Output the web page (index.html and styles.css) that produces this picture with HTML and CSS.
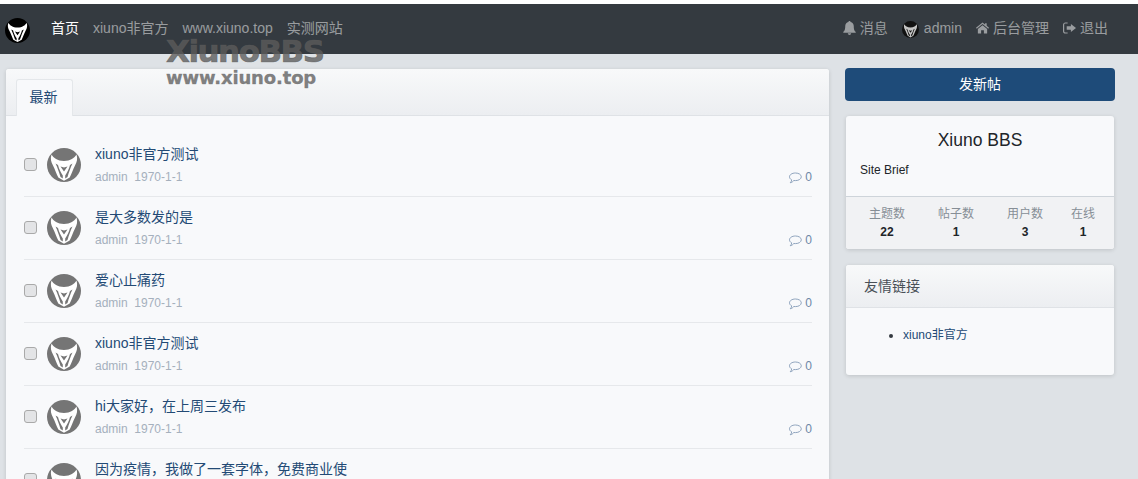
FILE: index.html
```html
<!DOCTYPE html>
<html lang="zh">
<head>
<meta charset="utf-8">
<title>Xiuno BBS</title>
<link rel="stylesheet" href="styles.css">
</head>
<body>
<svg class="defs" width="0" height="0" aria-hidden="true">
  <symbol id="mark" viewBox="0 0 34 34">
    <path class="mark-head" d="M4.500 6.500C6.500 10 10.500 13 17 13S27.500 10 29.500 6.500C30.800 10.500 30 14 28 17.500C26 21.500 24.500 26 22.700 29.500L17 32.800L11.300 29.500C9.500 26 8 21.500 6 17.500C4 14 3.200 10.500 4.500 6.500Z"/>
    <path class="mark-cut" d="M8.500 15.500L11 17C12 21 14 25 15.800 27.500V30.500L13.500 29C12 24 10.500 19.500 8.500 15.500ZM25.500 15.500L23 17C22 21 20 25 18.200 27.500V30.500L20.500 29C22 24 23.500 19.500 25.500 15.500Z"/>
    <path class="mark-cut" d="M13.500 18.500L17 19.500L20.500 18.500L17 23.500Z"/>
  </symbol>
  <symbol id="bubble" viewBox="0 0 14 12">
    <path d="M7.500 1C4 1 1.500 2.700 1.500 4.800C1.500 6.200 2.400 7.200 3.700 7.900C3.600 9 3 10 2.200 10.800C3.800 10.500 5 9.600 5.800 8.500C6.400 8.600 6.900 8.600 7.500 8.600C10.800 8.600 13.300 6.900 13.300 4.800S10.800 1 7.500 1Z"/>
  </symbol>
</svg>

<header class="navbar">
  <svg class="logo" viewBox="0 0 34 34"><circle cx="17" cy="17" r="17" fill="#000"/><use href="#mark"/></svg>
  <nav class="nav-left">
    <a class="nav-link active">首页</a>
    <a class="nav-link">xiuno非官方</a>
    <a class="nav-link">www.xiuno.top</a>
    <a class="nav-link">实测网站</a>
  </nav>
  <nav class="nav-right">
    <a class="nav-link icon-link">
      <svg class="nav-icon" viewBox="0 0 14 15"><path fill="currentColor" d="M7 0C6.300 0 5.800.5 5.800 1.100C3.700 1.600 2.400 3.300 2.400 5.500C2.400 9.500 1.500 10.500 .3 11.700V12.500H13.700V11.700C12.500 10.500 11.600 9.500 11.600 5.500C11.600 3.300 10.300 1.600 8.200 1.100C8.200.5 7.700 0 7 0ZM5.200 13.200C5.300 14.200 6.100 15 7 15S8.700 14.200 8.800 13.200Z"/></svg>
      消息
    </a>
    <a class="nav-link user-link">
      <svg class="nav-avatar" viewBox="0 0 34 34"><circle cx="17" cy="17" r="17" fill="#111"/><use href="#mark" class="mark-dim"/></svg>
      admin
    </a>
    <a class="nav-link icon-link">
      <svg class="nav-icon" viewBox="0 0 14 12"><path fill="currentColor" d="M7 0L0 5.800L.8 6.800L7 1.700L13.200 6.800L14 5.800L11.500 3.700V.8H9.800V2.300ZM2 7.200V12H5.500V8.400H8.500V12H12V7.200L7 3Z"/></svg>
      后台管理
    </a>
    <a class="nav-link icon-link">
      <svg class="nav-icon" viewBox="0 0 14 12"><path fill="currentColor" d="M5 1V0H2.500C1.100 0 0 1.100 0 2.500V9.500C0 10.900 1.100 12 2.500 12H5V10.800H2.600C1.800 10.800 1.300 10.300 1.300 9.500V2.500C1.300 1.700 1.800 1.200 2.600 1.200H5ZM8.500 1.800V4.200H4V7.800H8.500V10.200L14 6Z"/></svg>
      退出
    </a>
  </nav>
</header>

<div class="watermark">
  <div class="wm-big">XiunoBBS</div>
  <div class="wm-small">www.xiuno.top</div>
</div>

<div class="page">
  <main class="main-card">
    <div class="tabs"><a class="tab">最新</a></div>
    <ul class="threads">
      <li class="thread">
        <input class="check" type="checkbox">
        <svg class="avatar" viewBox="0 0 34 34"><circle cx="17" cy="17" r="17" fill="#757575"/><use href="#mark"/></svg>
        <div class="thread-body">
          <a class="thread-title">xiuno非官方测试</a>
          <div class="thread-meta"><span>admin&nbsp; 1970-1-1</span><span class="replies"><svg class="bubble" viewBox="0 0 14 12"><use href="#bubble"/></svg>0</span></div>
        </div>
      </li>
      <li class="thread">
        <input class="check" type="checkbox">
        <svg class="avatar" viewBox="0 0 34 34"><circle cx="17" cy="17" r="17" fill="#757575"/><use href="#mark"/></svg>
        <div class="thread-body">
          <a class="thread-title">是大多数发的是</a>
          <div class="thread-meta"><span>admin&nbsp; 1970-1-1</span><span class="replies"><svg class="bubble" viewBox="0 0 14 12"><use href="#bubble"/></svg>0</span></div>
        </div>
      </li>
      <li class="thread">
        <input class="check" type="checkbox">
        <svg class="avatar" viewBox="0 0 34 34"><circle cx="17" cy="17" r="17" fill="#757575"/><use href="#mark"/></svg>
        <div class="thread-body">
          <a class="thread-title">爱心止痛药</a>
          <div class="thread-meta"><span>admin&nbsp; 1970-1-1</span><span class="replies"><svg class="bubble" viewBox="0 0 14 12"><use href="#bubble"/></svg>0</span></div>
        </div>
      </li>
      <li class="thread">
        <input class="check" type="checkbox">
        <svg class="avatar" viewBox="0 0 34 34"><circle cx="17" cy="17" r="17" fill="#757575"/><use href="#mark"/></svg>
        <div class="thread-body">
          <a class="thread-title">xiuno非官方测试</a>
          <div class="thread-meta"><span>admin&nbsp; 1970-1-1</span><span class="replies"><svg class="bubble" viewBox="0 0 14 12"><use href="#bubble"/></svg>0</span></div>
        </div>
      </li>
      <li class="thread">
        <input class="check" type="checkbox">
        <svg class="avatar" viewBox="0 0 34 34"><circle cx="17" cy="17" r="17" fill="#757575"/><use href="#mark"/></svg>
        <div class="thread-body">
          <a class="thread-title">hi大家好，在上周三发布</a>
          <div class="thread-meta"><span>admin&nbsp; 1970-1-1</span><span class="replies"><svg class="bubble" viewBox="0 0 14 12"><use href="#bubble"/></svg>0</span></div>
        </div>
      </li>
      <li class="thread">
        <input class="check" type="checkbox">
        <svg class="avatar" viewBox="0 0 34 34"><circle cx="17" cy="17" r="17" fill="#757575"/><use href="#mark"/></svg>
        <div class="thread-body">
          <a class="thread-title">因为疫情，我做了一套字体，免费商业使</a>
        </div>
      </li>
    </ul>
  </main>

  <aside class="sidebar">
    <a class="new-btn">发新帖</a>
    <section class="card site-card">
      <h4 class="site-name">Xiuno BBS</h4>
      <p class="site-brief">Site Brief</p>
      <div class="stats">
        <div class="stat"><span class="stat-label">主题数</span><b>22</b></div>
        <div class="stat"><span class="stat-label">帖子数</span><b>1</b></div>
        <div class="stat"><span class="stat-label">用户数</span><b>3</b></div>
        <div class="stat"><span class="stat-label">在线</span><b>1</b></div>
      </div>
    </section>
    <section class="card links-card">
      <div class="links-head">友情链接</div>
      <ul class="links"><li><a>xiuno非官方</a></li></ul>
    </section>
  </aside>
</div>
</body>
</html>
```

FILE: styles.css
```css
* { box-sizing: border-box; }
html, body { height: 479px; overflow: hidden; }
body {
  margin: 0;
  position: relative;
  background: #dee2e6;
  color: #212529;
  font: 14px/21px "Liberation Sans", "Noto Sans CJK SC", sans-serif;
}
ul { margin: 0; padding: 0; list-style: none; }
.defs { position: absolute; }

.mark-head { fill: #fff; }
.mark-cut { fill: var(--cut, #757575); }
.logo { --cut: #000; }
.nav-avatar { --cut: #111; }
.mark-dim { opacity: .75; }

/* navbar */
.navbar {
  height: 54px;
  border-top: 4px solid #fff;
  background: #343a40;
  display: flex;
  align-items: center;
  justify-content: space-between;
  padding: 0 30px 0 5px;
  color: rgba(255, 255, 255, .5);
}
.logo { width: 25px; height: 25px; margin-top: 2px; margin-right: 22px; flex: none; }
.nav-left { display: flex; gap: 14px; flex: 1; margin: -2px 0 0 -1px; }
.nav-right { display: flex; align-items: center; gap: 14px; margin-top: -2px; }
.nav-link { color: rgba(255, 255, 255, .5); white-space: nowrap; }
.nav-link.active { color: #fff; }
.icon-link { display: flex; align-items: center; gap: 4px; }
.user-link { display: flex; align-items: center; gap: 5px; }
.nav-icon { width: 13px; height: 14px; flex: none; }
.nav-avatar { width: 17px; height: 17px; margin-top: 3px; flex: none; }

/* watermark */
.watermark {
  position: absolute;
  left: 166px;
  top: 38px;
  color: rgba(92, 92, 92, .8);
  font-family: "DejaVu Sans", sans-serif;
  font-weight: 700;
  white-space: nowrap;
  z-index: 5;
}
.wm-big {
  font-size: 31px;
  line-height: 27px;
  letter-spacing: -1.500px;
  -webkit-text-stroke: .7px rgba(92, 92, 92, .7);
}
.wm-small {
  margin-top: 4px;
  color: rgba(112, 112, 112, .9);
  font-size: 18px;
  line-height: 18px;
  letter-spacing: -.15px;
  -webkit-text-stroke: .4px rgba(112, 112, 112, .7);
}

/* layout */
.page {
  display: flex;
  align-items: flex-start;
  gap: 16px;
  padding: 14px 23px 0 6px;
}
.main-card {
  width: 823px;
  margin-top: 1px;
  flex: none;
  background: #f8f9fb;
  border-radius: 3px;
  box-shadow: 0 1px 4px rgba(0, 0, 0, .14);
}
.tabs {
  height: 47px;
  padding: 10px 10px 0;
  background: linear-gradient(#f8f9fa, #eceef1);
  border-bottom: 1px solid #dfe2e6;
  border-radius: 3px 3px 0 0;
  display: flex;
}
.tab {
  width: 57px;
  height: 37px;
  line-height: 35px;
  padding-right: 2px;
  text-align: center;
  color: #234a75;
  background: #f8f9fb;
  border: 1px solid #e4e7ea;
  border-bottom: 0;
  border-radius: 3px 3px 0 0;
}

/* thread list */
.threads { padding: 18px 17px 0 18px; }
.thread {
  display: flex;
  align-items: flex-start;
  height: 63px;
  padding: 10px 0 8px;
  border-bottom: 1px solid #e6e8eb;
}
.check {
  appearance: none;
  width: 13px;
  height: 13px;
  margin: 14px 10px 0 0;
  flex: none;
  background: #e3e4e6;
  border: 1px solid #a9a9a9;
  border-radius: 3px;
}
.avatar { width: 34px; height: 34px; margin: 3.500px 14px 0 0; flex: none; }
.thread-body { flex: 1; min-width: 0; }
.thread-title { display: block; color: #234a75; }
.thread-meta {
  margin-top: 2px;
  display: flex;
  justify-content: space-between;
  color: #a5b0bd;
  font-size: 12px;
}
.replies { display: flex; align-items: center; gap: 3px; color: #6d87a6; }
.bubble {
  width: 14px;
  height: 12px;
  fill: none;
  stroke: #8ea3bd;
  stroke-width: 1;
}

/* sidebar */
.sidebar { width: 270px; flex: none; display: flex; flex-direction: column; }
.new-btn {
  height: 33px;
  line-height: 33px;
  text-align: center;
  color: #fff;
  background: #1e4b79;
  border-radius: 4px;
}
.card {
  margin: 0 1px;
  background: #f8f9fb;
  border-radius: 3px;
  box-shadow: 0 1px 4px rgba(0, 0, 0, .14);
  overflow: hidden;
}
.site-card { margin-top: 15px; height: 133px; display: flex; flex-direction: column; }
.site-name {
  margin: 13px 0 0;
  font-size: 17.500px;
  line-height: 23px;
  font-weight: 400;
  text-align: center;
}
.site-brief { margin: 9px 0 0 14px; font-size: 12px; line-height: 18px; }
.stats {
  margin-top: auto;
  height: 53px;
  padding: 8px 0 0 23px;
  background: #f1f2f4;
  border-top: 1px solid #ced4da;
  display: grid;
  grid-template-columns: 69px 69px 64px 24px;
  font-size: 12px;
  line-height: 18px;
}
.stat { width: 100%; display: flex; flex-direction: column; align-items: flex-start; text-align: center; }
.stat b { display: block; width: 36px; color: #212529; }
.stat:last-child b { width: 24px; }
.stat-label { color: #868e96; white-space: nowrap; }

.links-card { margin-top: 16px; height: 110px; }
.links-head {
  height: 43px;
  line-height: 42px;
  padding-left: 18px;
  color: #495057;
  background: linear-gradient(#f8f9fa, #eceef1);
  border-bottom: 1px solid #dfe2e6;
}
.links {
  padding: 18px 0 0 57px;
  list-style: disc;
  font-size: 12px;
  line-height: 18px;
  color: #343a40;
}
.links a { color: #234a75; }
```
